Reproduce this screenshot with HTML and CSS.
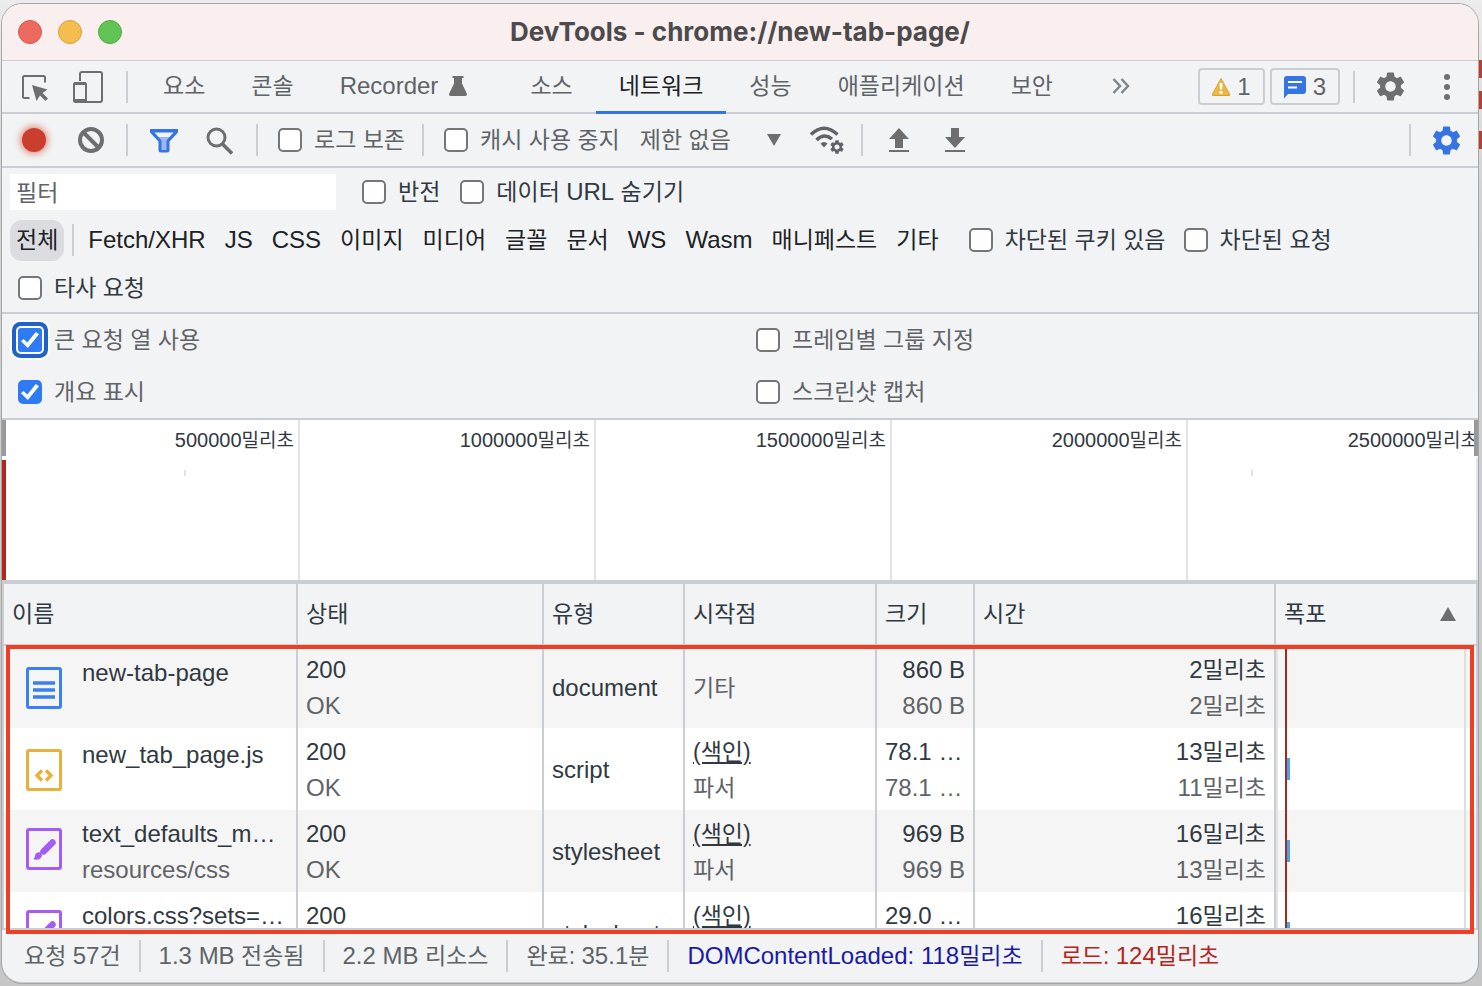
FILE: index.html
```html
<!DOCTYPE html>
<html lang="ko">
<head>
<meta charset="UTF-8" />
<meta name="viewport" content="width=device-width, initial-scale=1.0">
<title>DevTools - chrome://new-tab-page/</title>
<link rel="stylesheet" href="styles.css">
</head>
<body>

<!-- shared icon shapes -->
<svg class="sprite" width="0" height="0">
  <symbol id="gear" viewBox="2 2 20 20">
    <path d="M19.14 12.94c.04-.3.06-.61.06-.94 0-.32-.02-.64-.07-.94l2.03-1.58c.18-.14.23-.41.12-.61l-1.92-3.32c-.12-.22-.37-.29-.59-.22l-2.39.96c-.5-.38-1.03-.7-1.62-.94l-.36-2.54c-.04-.24-.24-.41-.48-.41h-3.84c-.24 0-.43.17-.47.41l-.36 2.54c-.59.24-1.13.57-1.62.94l-2.39-.96c-.22-.08-.47 0-.59.22L2.74 8.87c-.12.21-.08.47.12.61l2.03 1.58c-.05.3-.09.63-.09.94s.02.64.07.94l-2.03 1.58c-.18.14-.23.41-.12.61l1.92 3.32c.12.22.37.29.59.22l2.39-.96c.5.38 1.03.7 1.62.94l.36 2.54c.05.24.24.41.48.41h3.84c.24 0 .44-.17.47-.41l.36-2.54c.59-.24 1.13-.56 1.62-.94l2.39.96c.22.08.47 0 .59-.22l1.92-3.32c.12-.22.07-.47-.12-.61l-2.01-1.58zM12 15.6c-1.98 0-3.6-1.62-3.6-3.6s1.62-3.6 3.6-3.6 3.6 1.62 3.6 3.6-1.62 3.6-3.6 3.6z"/>
  </symbol>
  <symbol id="brush-file" viewBox="0 0 36 42">
    <rect x="1.5" y="1.5" width="33" height="39" rx="1.5" fill="none" stroke="#a35cf5" stroke-width="3"/>
    <path d="M17.500 23.500l9-9" stroke="#a35cf5" stroke-width="6.500" stroke-linecap="round"/>
    <path d="M12 24.500c2.500-.8 4.500 1.500 3.800 4-.8 2.800-4.800 4-8.800 2.500 2-1 1.800-2.500 2.200-4 .4-1.400 1.400-2.100 2.800-2.500z" fill="#a35cf5"/>
  </symbol>
</svg>

<div class="backdrop-mark mark-1"></div>
<div class="backdrop-mark mark-2"></div>
<div class="backdrop-mark mark-3"></div>

<div class="window">

  <header class="titlebar">
    <div class="lights">
      <span class="light red"></span>
      <span class="light yellow"></span>
      <span class="light green"></span>
    </div>
    <h1>DevTools - chrome://new-tab-page/</h1>
  </header>

  <nav class="tabbar">
    <button class="icon-btn inspect" aria-label="요소 선택">
      <svg width="28" height="28" viewBox="0 0 28 28">
        <path d="M8.500 24H3.500Q2 24 2 22.500V3.500Q2 2 3.500 2H22.500Q24 2 24 3.500V8.500" fill="none" stroke="#6e6e6e" stroke-width="2"/>
        <path d="M11 11l15.500 4.500-5 3.500 5.500 5.500-2.500 2.500-5.500-5.500-3.500 5.500z" fill="#6e6e6e"/>
      </svg>
    </button>
    <button class="icon-btn device" aria-label="기기 툴바">
      <svg width="30" height="32" viewBox="0 0 30 32">
        <path d="M7 10V3Q7 1 9 1H27Q29 1 29 3V29Q29 31 27 31H12" fill="none" stroke="#6e6e6e" stroke-width="2"/>
        <rect x="1" y="12" width="12" height="19" rx="1.500" fill="none" stroke="#6e6e6e" stroke-width="2"/>
        <path d="M1 12.500h12M1 29.500h12" stroke="#6e6e6e" stroke-width="3"/>
      </svg>
    </button>
    <span class="divider"></span>
    <div class="tabs">
      <button class="tab">요소</button>
      <button class="tab">콘솔</button>
      <button class="tab recorder">Recorder
        <svg width="18" height="20" viewBox="0 0 18 20"><path d="M3.500 0h11v2H13v5.500l5 10.500q0 2-1.500 2h-15Q0 20 0 18L5 7.500V2H3.500z" fill="#6e6e6e"/></svg>
      </button>
      <button class="tab">소스</button>
      <button class="tab active">네트워크</button>
      <button class="tab">성능</button>
      <button class="tab">애플리케이션</button>
      <button class="tab">보안</button>
      <button class="tab more" aria-label="탭 더보기">
        <svg width="18" height="16" viewBox="0 0 18 16"><path d="M1.500 1l6.500 7-6.500 7M9.500 1l6.500 7-6.500 7" fill="none" stroke="#80868b" stroke-width="2.500"/></svg>
      </button>
    </div>
    <div class="counters">
      <button class="counter">
        <svg width="18" height="18" viewBox="0 0 18 18"><path d="M9 0.500L17.500 16v1.500H.5V16z" fill="#ebb840" stroke="#d6a12d" stroke-width="1"/><path d="M7.500 5h3l-.5 6.500h-2zM7.500 13h3v3h-3z" fill="#fff"/></svg>
        1
      </button>
      <button class="counter">
        <svg width="22" height="24" viewBox="0 0 22 24"><path d="M3 1h16q3 0 3 3v12q0 3-3 3H4l-4 4.500V4q0-3 3-3z" fill="#3574e2"/><path d="M4 7h14M4 12.500h9" stroke="#fff" stroke-width="2"/></svg>
        3
      </button>
    </div>
    <span class="divider"></span>
    <button class="icon-btn main-gear" aria-label="설정"><svg class="gear" width="29" height="29"><use href="#gear"/></svg></button>
    <button class="icon-btn dots" aria-label="메뉴">
      <svg width="8" height="28" viewBox="0 0 8 28" fill="#6e6e6e"><circle cx="4" cy="4" r="3"/><circle cx="4" cy="14" r="3"/><circle cx="4" cy="24" r="3"/></svg>
    </button>
  </nav>

  <div class="toolbar">
    <button class="icon-btn record" aria-label="네트워크 로그 기록 중지"><span class="record-dot"></span></button>
    <button class="icon-btn clear" aria-label="삭제">
      <svg width="26" height="26" viewBox="0 0 26 26"><g fill="none" stroke="#6e6e6e" stroke-width="4"><circle cx="13" cy="13" r="11"/><path d="M5 5l16 16"/></g></svg>
    </button>
    <span class="divider"></span>
    <button class="icon-btn funnel" aria-label="필터">
      <svg width="28" height="24" viewBox="0 0 28 24">
        <path d="M0 0h28v3.500l-8.500 9V21q0 2.500-2.500 2.500h-6Q8.500 23.500 8.500 21v-8.500L0 3.500z" fill="#3574e2"/>
        <path d="M4.500 3.500h19L19.500 8h-11z" fill="#f1f3f4"/>
        <path d="M8.500 8h11L16.500 11.500V21h-5v-9.500z" fill="#9ab8ef"/>
      </svg>
    </button>
    <button class="icon-btn search" aria-label="검색">
      <svg width="28" height="28" viewBox="0 0 28 28"><g fill="none" stroke="#6e6e6e" stroke-width="3"><circle cx="10.500" cy="10.500" r="8.500"/><path d="M16.500 17l9.500 9.500" stroke-width="3.500"/></g></svg>
    </button>
    <span class="divider"></span>
    <label class="check"><input type="checkbox">로그 보존</label>
    <span class="divider"></span>
    <label class="check"><input type="checkbox">캐시 사용 중지</label>
    <div class="throttle">
      <select aria-label="제한"><option>제한 없음</option></select>
      <svg width="14" height="12" viewBox="0 0 14 12"><path d="M0 0h14L7 12z" fill="#6e6e6e"/></svg>
    </div>
    <button class="icon-btn conditions" aria-label="네트워크 상태">
      <svg width="34" height="30" viewBox="0 0 34 30">
        <g fill="none" stroke="#5f6368" stroke-width="3.500">
          <path d="M1 9.500Q14 -3 27.500 9.500"/>
          <path d="M6.500 15Q14 7.500 22 14"/>
        </g>
        <path d="M10.500 18.500q3.500-3 7 0L14 22.500z" fill="#5f6368"/>
        <svg x="20" y="15" width="14" height="14" fill="#5f6368"><use href="#gear"/></svg>
      </svg>
    </button>
    <span class="divider"></span>
    <button class="icon-btn upload" aria-label="HAR 가져오기">
      <svg width="20" height="24" viewBox="0 0 20 24"><path d="M10 0l10 11h-6v9H6v-9H0zM0 22h20v2H0z" fill="#6e6e6e"/></svg>
    </button>
    <button class="icon-btn download" aria-label="HAR 내보내기">
      <svg width="20" height="24" viewBox="0 0 20 24"><path d="M10 20L0 9h6V0h8v9h6zM0 22h20v2H0z" fill="#6e6e6e"/></svg>
    </button>
    <div class="spacer"></div>
    <span class="divider"></span>
    <button class="icon-btn net-gear" aria-label="네트워크 설정"><svg class="gear blue" width="29" height="29"><use href="#gear"/></svg></button>
  </div>

  <section class="filters">
    <div class="filter-row">
      <input class="filter-input" type="text" placeholder="필터" aria-label="필터">
      <label class="check dark"><input type="checkbox">반전</label>
      <label class="check dark"><input type="checkbox"><span>데이터 <span class="latin">URL</span> 숨기기</span></label>
    </div>
    <div class="type-row">
      <div class="types">
        <button class="type selected">전체</button>
        <span class="divider"></span>
        <button class="type latin">Fetch/XHR</button>
        <button class="type latin">JS</button>
        <button class="type latin">CSS</button>
        <button class="type">이미지</button>
        <button class="type">미디어</button>
        <button class="type">글꼴</button>
        <button class="type">문서</button>
        <button class="type latin">WS</button>
        <button class="type latin">Wasm</button>
        <button class="type">매니페스트</button>
        <button class="type">기타</button>
      </div>
      <label class="check dark"><input type="checkbox">차단된 쿠키 있음</label>
      <label class="check dark"><input type="checkbox">차단된 요청</label>
      <label class="check dark"><input type="checkbox">타사 요청</label>
    </div>
  </section>

  <section class="settings">
    <label class="check"><input class="focused" type="checkbox" checked>큰 요청 열 사용</label>
    <label class="check"><input type="checkbox">프레임별 그룹 지정</label>
    <label class="check"><input type="checkbox" checked>개요 표시</label>
    <label class="check"><input type="checkbox">스크린샷 캡처</label>
  </section>

  <section class="overview">
    <div class="slot">500000<span class="unit">밀리초</span></div>
    <div class="slot">1000000<span class="unit">밀리초</span></div>
    <div class="slot">1500000<span class="unit">밀리초</span></div>
    <div class="slot">2000000<span class="unit">밀리초</span></div>
    <div class="slot">2500000<span class="unit">밀리초</span></div>
    <span class="handle left"></span>
    <span class="handle right"></span>
    <span class="load-edge"></span>
    <span class="end-edge"></span>
    <span class="blip" style="left: 12.3%"></span>
    <span class="blip" style="left: 84.6%"></span>
  </section>

  <section class="requests">
    <div class="grid-view">
      <table>
        <colgroup>
          <col class="col-name"><col class="col-status"><col class="col-type"><col class="col-initiator"><col class="col-size"><col class="col-time"><col class="col-waterfall">
        </colgroup>
        <thead>
          <tr>
            <th>이름</th>
            <th>상태</th>
            <th>유형</th>
            <th>시작점</th>
            <th>크기</th>
            <th>시간</th>
            <th><div class="sorted">폭포 <svg width="16" height="14" viewBox="0 0 16 14"><path d="M8 0l8 14H0z" fill="#6e6e6e"/></svg></div></th>
          </tr>
        </thead>
        <tbody>
          <tr>
            <td>
              <div class="name plain">
                <svg width="36" height="42" viewBox="0 0 36 42"><rect x="1.500" y="1.500" width="33" height="39" rx="1.500" fill="none" stroke="#3b7ff5" stroke-width="3"/><path d="M7 16h22M7 23h22M7 30h22" stroke="#3b7ff5" stroke-width="3.500"/></svg>
                <div class="name-text">new-tab-page</div>
              </div>
            </td>
            <td>200<div class="sub">OK</div></td>
            <td>document</td>
            <td class="ko"><div class="sub">기타</div></td>
            <td class="num">860 B<div class="sub">860 B</div></td>
            <td class="num ko"><span class="latin">2</span>밀리초<div class="sub"><span class="latin">2</span>밀리초</div></td>
            <td class="waterfall"><div class="track"></div></td>
          </tr>
          <tr>
            <td>
              <div class="name plain">
                <svg width="36" height="42" viewBox="0 0 36 42"><rect x="1.500" y="1.500" width="33" height="39" rx="1.500" fill="none" stroke="#e8b13c" stroke-width="3"/><path d="M16 21.500l-5 5 5 5M20 21.500l5 5-5 5" fill="none" stroke="#e8b13c" stroke-width="3.500"/></svg>
                <div class="name-text">new_tab_page.js</div>
              </div>
            </td>
            <td>200<div class="sub">OK</div></td>
            <td>script</td>
            <td class="ko"><a href="#">(색인)</a><div class="sub">파서</div></td>
            <td class="num">78.1 kB<div class="sub">78.1 kB</div></td>
            <td class="num ko"><span class="latin">13</span>밀리초<div class="sub"><span class="latin">11</span>밀리초</div></td>
            <td class="waterfall"><div class="track"><span class="bar"></span></div></td>
          </tr>
          <tr>
            <td>
              <div class="name">
                <svg width="36" height="42"><use href="#brush-file"/></svg>
                <div class="name-text">text_defaults_md.css<div class="sub">resources/css</div></div>
              </div>
            </td>
            <td>200<div class="sub">OK</div></td>
            <td>stylesheet</td>
            <td class="ko"><a href="#">(색인)</a><div class="sub">파서</div></td>
            <td class="num">969 B<div class="sub">969 B</div></td>
            <td class="num ko"><span class="latin">16</span>밀리초<div class="sub"><span class="latin">13</span>밀리초</div></td>
            <td class="waterfall"><div class="track"><span class="bar"></span></div></td>
          </tr>
          <tr>
            <td>
              <div class="name">
                <svg width="36" height="42"><use href="#brush-file"/></svg>
                <div class="name-text">colors.css?sets=ui,sys</div>
              </div>
            </td>
            <td>200<div class="sub">&nbsp;</div></td>
            <td>stylesheet</td>
            <td class="ko"><a href="#">(색인)</a><div class="sub">&nbsp;</div></td>
            <td class="num">29.0 kB<div class="sub">&nbsp;</div></td>
            <td class="num ko"><span class="latin">16</span>밀리초<div class="sub">&nbsp;</div></td>
            <td class="waterfall"><div class="track"><span class="bar"></span></div></td>
          </tr>
        </tbody>
      </table>
    </div>
    <div class="highlight"></div>
  </section>

  <footer class="statusbar">
    <span class="stat">요청 <span class="latin">57</span>건</span>
    <span class="stat"><span class="latin">1.3 MB</span> 전송됨</span>
    <span class="stat"><span class="latin">2.2 MB</span> 리소스</span>
    <span class="stat">완료: <span class="latin">35.1</span>분</span>
    <span class="stat dcl"><span class="latin">DOMContentLoaded: 118</span>밀리초</span>
    <span class="stat load">로드: <span class="latin">124</span>밀리초</span>
  </footer>

</div>
</body>
</html>
```
FILE: styles.css
```css
* {
  box-sizing: border-box;
}

body {
  margin: 0;
  padding: 4px 4px 3px 2px;
  height: 100vh;
  overflow: hidden;
  background: linear-gradient(#ececec, #d2d2d2 20%, #c6c6c6);
  font-family: "Liberation Sans", "Noto Sans CJK KR", sans-serif;
  font-size: 23px;
  line-height: 36px;
  color: #303942;
}

button,
input,
select {
  font: inherit;
  color: inherit;
  margin: 0;
  padding: 0;
  border: none;
  background: none;
}

svg {
  display: block;
  flex: none;
}

.sprite {
  position: absolute;
}

.latin {
  font-size: 24px;
}

/* bits of the page behind the window */
.backdrop-mark {
  position: absolute;
  right: 0;
  width: 8px;
  height: 18px;
  background: #b8402f;
}

.mark-1 { top: 60px; }
.mark-2 { top: 91px; }
.mark-3 { top: 131px; }

.window {
  position: relative;
  display: flex;
  flex-direction: column;
  height: 100%;
  border-radius: 20px;
  overflow: hidden;
  background: #f1f3f4;
  border-bottom: 1px solid #cacdd1;
  box-shadow: 0 0 0 1px #a6a6a6;
}

/* title bar */
.titlebar {
  position: relative;
  display: flex;
  align-items: center;
  justify-content: center;
  height: 57px;
  flex: none;
  background: #f9efef;
  border-bottom: 1px solid #cdcdcd;
}

.titlebar h1 {
  margin: 0;
  font-family: Inter, sans-serif;
  font-size: 26px;
  font-weight: 700;
  color: #4c4a4a;
}

.lights {
  position: absolute;
  left: 16px;
  display: flex;
  gap: 16px;
}

.light {
  width: 24px;
  height: 24px;
  border-radius: 50%;
  border: 1px solid;
}

.light.red { background: #ed6a5e; border-color: #d8584d; }
.light.yellow { background: #f5bd4f; border-color: #dba03a; }
.light.green { background: #61c454; border-color: #51a842; }

/* tab bar and toolbar */
.tabbar,
.toolbar {
  display: flex;
  align-items: center;
  flex: none;
  border-bottom: 2px solid #cacdd3;
  color: #5f6368;
}

.tabbar {
  height: 53px;
}

.toolbar {
  height: 54px;
}

.divider {
  flex: none;
  width: 2px;
  height: 32px;
  background: #cacdd1;
}

.icon-btn {
  display: flex;
  align-items: center;
  justify-content: center;
  flex: none;
}

.gear {
  fill: #6e6e6e;
}

.gear.blue {
  fill: #3574e2;
}

.inspect { margin: 2px 24px 0 19px; }
.device { margin-right: 23px; }

.tabs {
  display: flex;
  flex: 1;
  align-self: stretch;
  margin: 0 0 -2px 12px;
}

.tab {
  padding: 0 23px;
  border-bottom: 3px solid transparent;
  white-space: nowrap;
}

.tab.active {
  color: #202124;
  border-bottom-color: #3574e2;
}

.tab.recorder {
  display: flex;
  align-items: center;
  gap: 11px;
  padding-right: 40px;
  font-size: 24px;
}

.tab.more {
  padding: 0 36px;
}

.counters {
  display: flex;
  gap: 5px;
  margin-right: 13px;
}

.counter {
  display: flex;
  align-items: center;
  gap: 7px;
  height: 37px;
  padding: 0 12px;
  border: 2px solid #cacdd1;
  border-radius: 4px;
  font-size: 24px;
}

.main-gear { margin: 0 38px 0 21px; }
.dots { margin-right: 27px; }

.record {
  margin: 0 25px 0 20px;
}

.record-dot {
  width: 24px;
  height: 24px;
  border-radius: 50%;
  background: #c93e2e;
  box-shadow: 0 0 6px 2px rgba(217, 80, 60, 0.6);
}

.clear { margin: 0 22px 0 7px; }
.funnel { margin: 2px 28px 0 22px; }
.search { margin: 2px 22px 0 0; }

.check {
  display: flex;
  align-items: center;
  gap: 12px;
  white-space: nowrap;
  color: #5f6368;
}

.check.dark {
  color: #303942;
}

.check input {
  appearance: none;
  display: grid;
  place-content: center;
  flex: none;
  width: 24px;
  height: 24px;
  border: 2px solid #767676;
  border-radius: 5px;
  background: #fff;
}

.check input:checked {
  border-color: #2f7bf6;
  background: #2f7bf6;
}

.check input:checked::before {
  content: "";
  width: 18px;
  height: 16px;
  background: #fff;
  clip-path: polygon(0 58%, 14% 44%, 35% 66%, 82% 0, 100% 14%, 38% 100%);
}

.check input.focused {
  border-radius: 3px;
  box-shadow: 0 0 0 2px #fff, 0 0 0 6px #1f62c9, 0 0 0 8px #fff;
}

.toolbar .check {
  margin: 0 17px 0 20px;
}

.toolbar .check:has(+ .throttle) {
  margin-right: 20px;
}

.throttle {
  position: relative;
  display: flex;
  align-items: center;
}

.throttle select {
  appearance: none;
  width: 144px;
  height: 36px;
}

.throttle svg {
  position: absolute;
  right: 3px;
  pointer-events: none;
}

.conditions { margin: 0 17px 0 26px; }
.upload { margin: 0 36px 0 26px; }

.spacer {
  flex: 1;
}

.net-gear { margin: 0 17px 0 21px; }

/* filters */
.filters {
  flex: none;
  padding: 6px 8px 0;
  border-bottom: 2px solid #cacdd3;
}

.filter-row {
  display: flex;
  align-items: center;
  gap: 20px;
}

.filter-input {
  width: 326px;
  height: 36px;
  padding: 2px 6px 0;
  margin-right: 6px;
  background: #fff;
}

.filter-input::placeholder {
  color: #5f6368;
  opacity: 1;
}

.type-row {
  display: flex;
  flex-wrap: wrap;
  align-items: center;
  column-gap: 18px;
  padding-top: 6px;
}

.type-row > .check {
  height: 48px;
}

.type-row > .check:last-child {
  margin-left: 8px;
}

.types {
  display: flex;
  align-items: center;
  gap: 7px;
  margin-right: 6px;
  color: #202124;
}

.types .divider {
  margin: 0 1px;
}

.type {
  height: 41px;
  padding: 0 6px;
  border-radius: 12px;
  white-space: nowrap;
}

.type.selected {
  background: #dadce0;
}

.settings {
  display: grid;
  grid-template-columns: 1fr 1fr;
  grid-auto-rows: 52px;
  flex: none;
  border-bottom: 2px solid #cacdd1;
}

.settings .check {
  padding-left: 16px;
}

/* overview timeline */
.overview {
  position: relative;
  display: flex;
  flex: none;
  height: 164px;
  padding-left: 2px;
  overflow: hidden;
  background: #fff;
  border-bottom: 4px solid #cacdd1;
}

.slot {
  flex: none;
  width: 296px;
  padding: 2px 4px 0 0;
  border-right: 2px solid #e4e4e4;
  text-align: right;
  font-size: 20px;
}

.unit {
  font-size: 19px;
}

.handle {
  position: absolute;
  top: 0;
  width: 4px;
  height: 36px;
  background: #999;
}

.handle.left { left: 0; }
.handle.right { right: 0; }

.load-edge {
  position: absolute;
  left: 0;
  top: 40px;
  bottom: 0;
  width: 4px;
  background: #b3261e;
}

.end-edge {
  position: absolute;
  right: 0;
  top: 38px;
  bottom: 0;
  width: 2px;
  background: #dce6f5;
}

.blip {
  position: absolute;
  top: 50px;
  width: 2px;
  height: 6px;
  background: #e2e2e2;
}

/* request table */
.requests {
  position: relative;
  flex: 1;
  min-height: 0;
  border-bottom: 2px solid #cacdd1;
}

.grid-view {
  height: 100%;
  overflow: hidden;
  border-left: 2px solid #cacdd1;
}

table {
  width: 100%;
  table-layout: fixed;
  border-collapse: separate;
  border-spacing: 0;
  background: #fff;
}

.col-name { width: 294px; }
.col-status { width: 246px; }
.col-type { width: 141px; }
.col-initiator { width: 192px; }
.col-size { width: 98px; }
.col-waterfall { width: 202px; }

th,
td {
  padding: 0 8px;
  border-right: 2px solid #cacdd1;
  overflow: hidden;
  text-overflow: ellipsis;
  white-space: nowrap;
}

th {
  height: 62px;
  border-bottom: 2px solid #cacdd1;
  background: #f1f3f4;
  text-align: left;
  font-weight: 400;
}

td {
  height: 82px;
  padding-top: 2px;
  font-size: 24px;
}

tbody tr:nth-child(odd) {
  background: #f5f5f5;
}

td.ko {
  font-size: 23px;
}

td a {
  color: inherit;
}

.sub {
  color: #5f6368;
  overflow: hidden;
  text-overflow: ellipsis;
}

.num {
  text-align: right;
}

.sorted {
  display: flex;
  align-items: center;
  justify-content: space-between;
  padding-right: 12px;
}

.name {
  display: flex;
  gap: 20px;
  height: 72px;
  padding-left: 14px;
}

.name svg {
  margin-top: 12px;
}

.name.plain {
  padding-top: 3px;
}

.name-text {
  flex: 1;
  min-width: 0;
  overflow: hidden;
  text-overflow: ellipsis;
}

.waterfall {
  padding: 0 10px 0 9px;
  box-shadow: inset 2px 0 #e4e4e4;
}

.track {
  display: flex;
  align-items: center;
  height: 82px;
  border-left: 2px solid #a32a20;
  border-right: 2px solid #dedede;
}

.bar {
  width: 3px;
  height: 22px;
  background: #46a5f0;
}

.highlight {
  position: absolute;
  top: 61px;
  left: 4px;
  right: 4px;
  bottom: -6px;
  border: 4px solid #ee3f24;
  pointer-events: none;
}

/* status bar */
.statusbar {
  display: flex;
  align-items: center;
  flex: none;
  height: 52px;
  padding-left: 4px;
  color: #5f6368;
}

.stat {
  padding: 0 18px;
  line-height: 32px;
  border-left: 2px solid #cacdd1;
  white-space: nowrap;
}

.stat:first-child {
  border-left: none;
}

.dcl { color: #1a1aa6; }
.load { color: #b8231a; }
```
